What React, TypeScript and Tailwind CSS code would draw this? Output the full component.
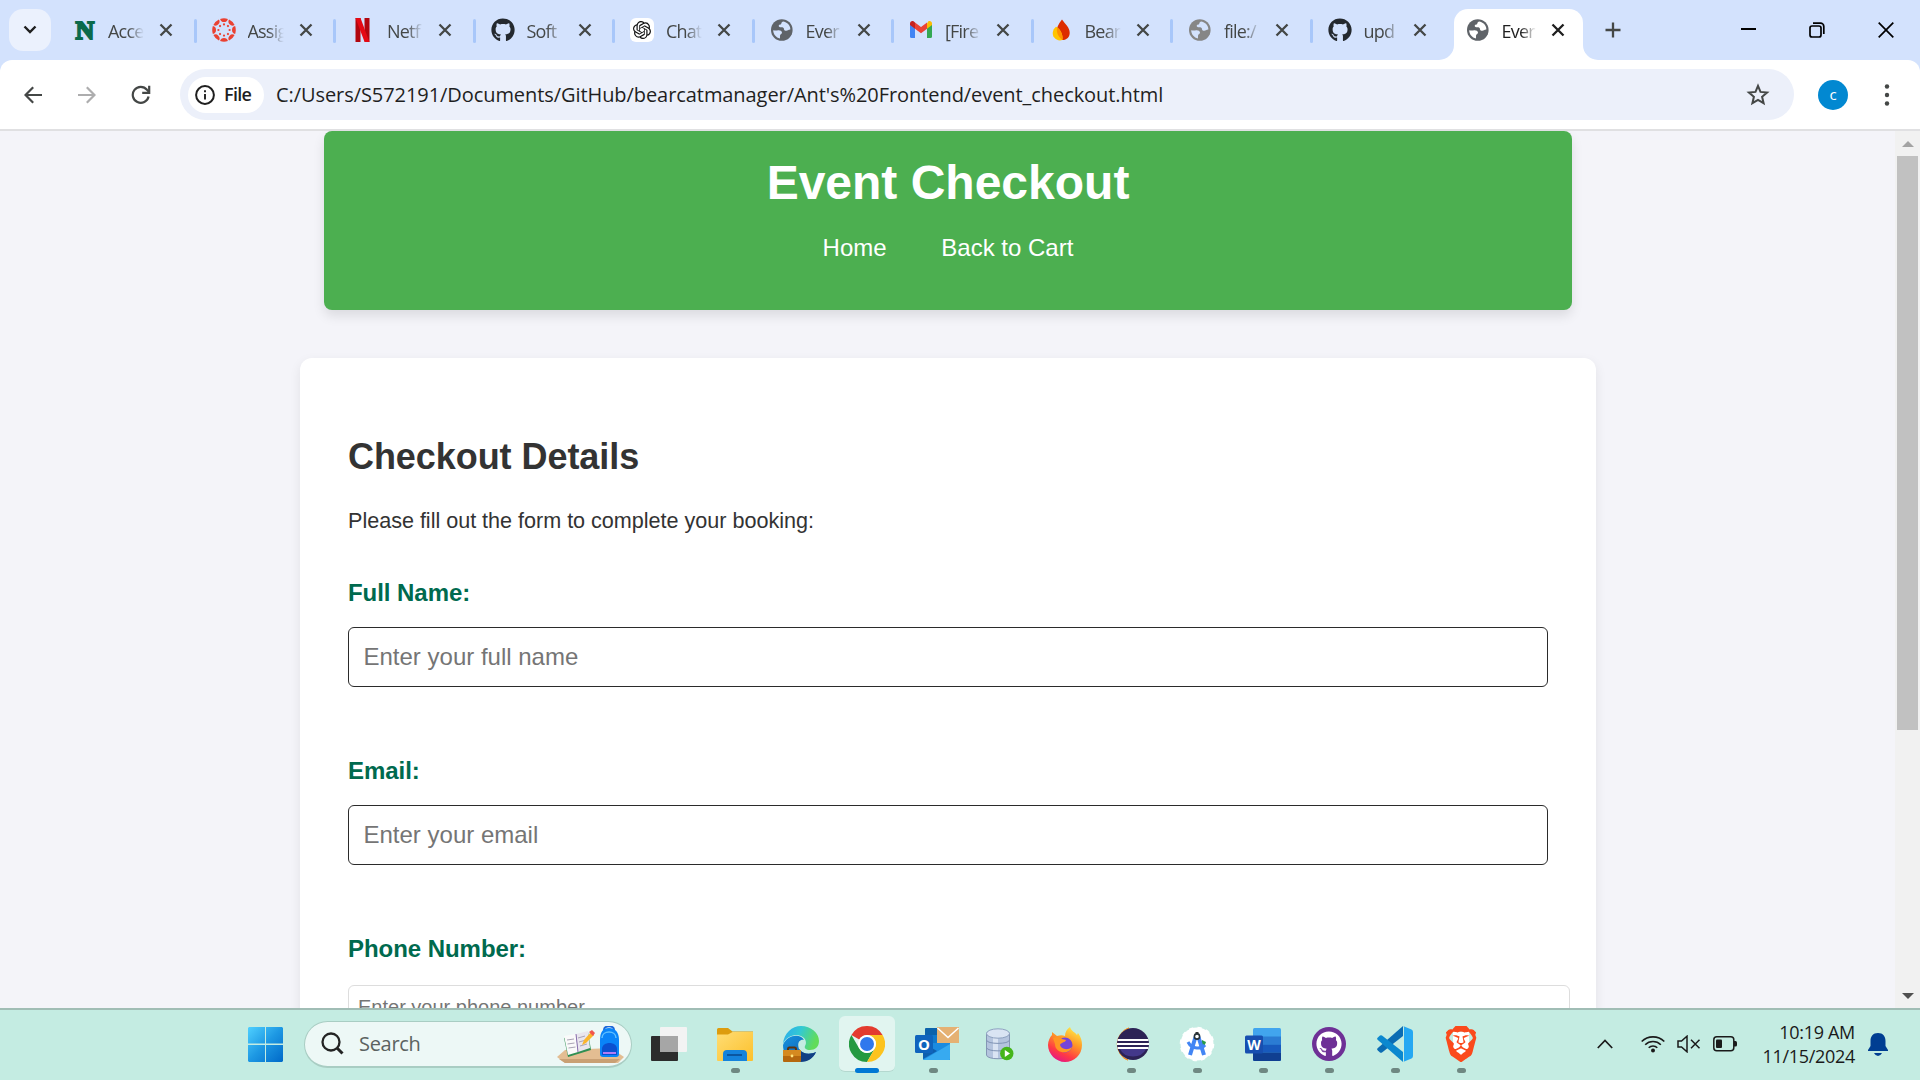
import React from "react";
import { FaGithub } from "react-icons/fa";
import { SiOpenai, SiBrave } from "react-icons/si";

const UI = "font-['Open_Sans','Noto_Sans',sans-serif]";

function Close({ dark }: { dark?: boolean }) {
  return (
    <svg width="14" height="14" viewBox="0 0 14 14" className="shrink-0">
      <path d="M1.500 1.500 12.500 12.500M12.500 1.500 1.500 12.500" stroke={dark ? "#1f1f1f" : "#444746"} strokeWidth="2.300" />
    </svg>
  );
}

function GlobeIcon({ color, land }: { color: string; land: string }) {
  return (
    <svg width="24" height="24" viewBox="0 0 24 24" className="shrink-0">
      <circle cx="11.800" cy="12" r="10.800" fill={color} />
      <path d="M13.500 3.400c-1.500.2-2.200 1-2.200 2.200 0 1.300-2.600.8-2.600 2.400 0 1 1.200 1.300 2.600 1.300 1.700 0 2.700.6 2.700 2 0 1.300 1.200 1.500 2.300 1.500 1.400 0 1.800-1.300 4-1.300.4-3.400-2.600-7.200-6.800-8.100z" fill={land} />
      <path d="M3.200 12.200c1.800.2 3.500.3 4.800 0 1.800-.3 3.700.6 4 2.200.2 1.300-1.700 1.500-1.900 2.800-.2 1.500 0 2.300-.2 3.300-3.700-.9-6.700-4.300-6.700-8.300z" fill={land} />
    </svg>
  );
}

function CanvasIcon() {
  const spokes = [0, 45, 90, 135, 180, 225, 270, 315];
  return (
    <svg width="24" height="24" viewBox="-12 -12 24 24">
      {spokes.map((a) => (
        <g key={a} transform={`rotate(${a})`} fill="#ea4132">
          <path d="M-3.900 -11.100 A11.800 11.800 0 0 1 3.900 -11.100 A4 4 0 0 1 -3.900 -11.100Z" />
          <circle cx="0" cy="-5.600" r="1.100" />
        </g>
      ))}
    </svg>
  );
}

function NetflixIcon() {
  return (
    <svg width="24" height="24" viewBox="0 0 24 24">
      <path d="M4.500 0h5v24l-5 .3z M13.500 0h5v24l-5-.3z" fill="#b1060f" />
      <path d="M4.500 0h5l9 24.200-5-.5z" fill="#e50914" />
    </svg>
  );
}

function GmailIcon() {
  return (
    <svg width="24" height="24" viewBox="0 0 24 24">
      <path d="M1 6v12.500a1.500 1.500 0 0 0 1.500 1.500H6V9.800z" fill="#4285f4" />
      <path d="M23 6v12.500a1.500 1.500 0 0 1-1.500 1.500H18V9.800z" fill="#34a853" />
      <path d="M18 5.500v5.300l5-3.800V5.300c0-2-2.200-3-3.800-1.900z" fill="#fbbc04" />
      <path d="M6 10.800V4.500l6 4.600 6-4.600v6.300l-6 4.500z" fill="#ea4335" />
      <path d="M1 5.300V7l5 3.800V4.500L4.800 3.400C3.200 2.300 1 3.300 1 5.300z" fill="#c5221f" />
    </svg>
  );
}

function FlameIcon() {
  return (
    <svg width="24" height="24" viewBox="0 0 24 24">
      <path d="M13 1.500C10.500 5 8 8 7.800 13c-.2 5 2.200 9 5.700 9 4.300 0 7.200-3 7.200-7.300C20.700 9.500 16.500 6.500 13 1.500z" fill="#dd2c00" />
      <path d="M7 8.800C3.200 12 3 16.500 5 19.300c2 2.700 5.200 3.700 8.300 2.700C14.500 17 11 10.500 7 8.800z" fill="#ffc400" />
      <path d="M8.200 9.600C7 14 9 19 13.400 22 14.300 17.500 11.500 12 8.200 9.600z" fill="#ff9100" />
    </svg>
  );
}

const tabs: { label: string; icon: React.ReactNode }[] = [
  {
    label: "Acce",
    icon: (
      <span className="block h-6 w-6 pl-0.5 text-center font-['Liberation_Serif',serif] text-[26px] font-bold leading-[26px] text-[#0b6a4b] [-webkit-text-stroke:2px_#0b6a4b]">
        N
      </span>
    ),
  },
  { label: "Assig", icon: <CanvasIcon /> },
  { label: "Netf", icon: <NetflixIcon /> },
  { label: "Soft", icon: <FaGithub size={24} color="#24292f" /> },
  {
    label: "Chat",
    icon: (
      <span className="flex h-6 w-6 items-center justify-center rounded-md bg-white">
        <SiOpenai size={18} color="#111" />
      </span>
    ),
  },
  { label: "Ever", icon: <GlobeIcon color="#5f6368" land="#d3e2fd" /> },
  { label: "[Fire", icon: <GmailIcon /> },
  { label: "Bear", icon: <FlameIcon /> },
  { label: "file:/", icon: <GlobeIcon color="#868686" land="#d3e2fd" /> },
  { label: "upd", icon: <FaGithub size={24} color="#24292f" /> },
];

const fade = "[mask-image:linear-gradient(to_right,black_55%,transparent_100%)]";

function TabStrip() {
  return (
    <div className={`flex h-[60px] items-end bg-[#d3e2fd] ${UI}`}>
      <div className="mb-[9px] ml-[9px] flex h-[42px] w-[42px] items-center justify-center rounded-[14px] bg-[#ebf1fd]">
        <svg width="14" height="10" viewBox="0 0 14 10">
          <path d="M1.500 1.500 7 7l5.500-5.500" fill="none" stroke="#1f1f1f" strokeWidth="2.400" />
        </svg>
      </div>
      <div className="ml-[5px] flex h-[60px]">
        {tabs.map((t, i) => (
          <div
            key={i}
            className={`relative flex h-[60px] items-center pl-4 ${i === 9 ? "w-[128px]" : "w-[139.500px]"}`}
          >
            <span className="flex h-6 w-6 shrink-0 items-center justify-center">{t.icon}</span>
            <span
              className={`ml-3 w-[36px] whitespace-nowrap pt-0.5 text-[18px] leading-6 tracking-[-0.8px] text-[#444746] ${fade} ${i === 9 ? "mr-[13px]" : "mr-[15px]"}`}
            >
              {t.label}
            </span>
            <Close />
            {i < 9 && <span className="absolute -right-px top-[19px] h-6 w-[3px] rounded-full bg-[#a8c7fa]" />}
          </div>
        ))}
      </div>
      <svg width="15" height="15" viewBox="0 0 15 15" className="-ml-px">
        <path d="M0 15A15 15 0 0 0 15 0V15z" fill="#fff" />
      </svg>
      <div className="flex h-[51px] w-[129px] items-center rounded-t-[14px] bg-white pb-[9px] pl-3">
        <GlobeIcon color="#5f6368" land="#ffffff" />
        <span className={`ml-3 w-[34px] whitespace-nowrap pt-0.5 text-[18px] leading-6 tracking-[-0.8px] text-[#1f1f1f] ${fade}`}>
          Ever
        </span>
        <span className="ml-[15.500px]">
          <Close dark />
        </span>
      </div>
      <svg width="15" height="15" viewBox="0 0 15 15">
        <path d="M15 15A15 15 0 0 1 0 0V15z" fill="#fff" />
      </svg>
      <div className="flex h-[60px] flex-1 items-center pl-[7px]">
        <svg width="16" height="16" viewBox="0 0 16 16">
          <path d="M8 .5v15M.5 8h15" stroke="#444746" strokeWidth="2.300" />
        </svg>
        <svg width="15" height="16" viewBox="0 0 15 16" className="ml-[120px]">
          <path d="M0 7h15" stroke="#000" strokeWidth="2" />
        </svg>
        <svg width="16" height="16" viewBox="0 0 16 16" className="ml-[53px]">
          <rect x="1" y="4" width="11" height="11" rx="2" fill="none" stroke="#000" strokeWidth="1.700" />
          <path d="M4 1.200h7.500a3.300 3.300 0 0 1 3.300 3.300V12" fill="none" stroke="#000" strokeWidth="1.700" />
        </svg>
        <svg width="16" height="16" viewBox="0 0 16 16" className="ml-[53px]">
          <path d="M.7.7l14.600 14.600M15.300.7.7 15.300" stroke="#000" strokeWidth="1.700" />
        </svg>
      </div>
    </div>
  );
}

function Toolbar() {
  return (
    <div className="bg-[#d3e2fd]">
      <div className={`flex h-[71px] items-center rounded-t-xl border-b-2 border-[#e0e0e2] bg-white ${UI}`}>
        <svg width="18" height="18" viewBox="0 0 18 18" className="ml-6">
          <path d="M18 9H1.500M9.200 1.200 1.500 9l7.700 7.800" fill="none" stroke="#444746" strokeWidth="2.200" />
        </svg>
        <svg width="18" height="18" viewBox="0 0 18 18" className="ml-9">
          <path d="M0 9h16.500M8.800 1.200 16.500 9l-7.700 7.800" fill="none" stroke="#adadae" strokeWidth="2.200" />
        </svg>
        <svg width="20" height="20" viewBox="0 0 20 20" className="ml-[35px]">
          <path d="M17.600 11.500A8 8 0 1 1 16 4.800L18 7" fill="none" stroke="#444746" strokeWidth="2.200" />
          <path d="M18.200.8v7h-7" fill="none" stroke="#444746" strokeWidth="2.200" />
        </svg>
        <div className="ml-[29px] flex h-[51px] w-[1614px] items-center rounded-full bg-[#ecf0fa] pl-2">
          <div className="flex h-9 w-[76px] items-center rounded-full bg-white pl-[7px]">
            <svg width="20" height="20" viewBox="0 0 20 20">
              <circle cx="10" cy="10" r="8.900" fill="none" stroke="#1f1f1f" strokeWidth="2" />
              <path d="M10 9v5.500M10 5.300v2" stroke="#1f1f1f" strokeWidth="1.900" />
            </svg>
            <span className="ml-[9px] text-[18px] font-semibold tracking-[-0.7px] text-[#1f1f1f]">File</span>
          </div>
          <span className="ml-3 whitespace-nowrap text-[20px] tracking-[-0.070px] text-[#1f1f1f]">
            C:/Users/S572191/Documents/GitHub/bearcatmanager/Ant's%20Frontend/event_checkout.html
          </span>
          <svg width="24" height="24" viewBox="0 0 24 24" className="ml-auto mr-6">
            <path
              d="m12 2.800 2.500 6.100 6.600.6-5 4.300 1.500 6.400L12 16.800l-5.600 3.400 1.500-6.400-5-4.300 6.600-.6z"
              fill="none"
              stroke="#444746"
              strokeWidth="2"
            />
          </svg>
        </div>
        <div className="ml-6 flex h-[30px] w-[30px] items-center justify-center rounded-full bg-[#0288d1] text-[15px] leading-none text-white">
          c
        </div>
        <svg width="6" height="24" viewBox="0 0 6 24" className="ml-9">
          <circle cx="3" cy="3.500" r="2.200" fill="#444746" />
          <circle cx="3" cy="12" r="2.200" fill="#444746" />
          <circle cx="3" cy="20.500" r="2.200" fill="#444746" />
        </svg>
      </div>
    </div>
  );
}

function Field({ label, hint }: { label: string; hint: string }) {
  return (
    <div className="h-[178px]">
      <div className="text-2xl font-bold leading-[34px] tracking-[-0.050px] text-[#006a4e]">{label}</div>
      <div className="mt-[17px] flex h-[60px] w-[1200px] items-center rounded-md border border-[#2b2b2b] pl-[14.500px] text-2xl text-[#757575]">
        {hint}
      </div>
    </div>
  );
}

function Page() {
  return (
    <div className="flex h-[877px] overflow-hidden bg-[#f4f4f9] font-['Liberation_Sans',Arial,sans-serif] text-[#333]">
      <div className="w-[1895px] overflow-hidden">
        <div className="ml-[324px] flex h-[179px] w-[1248px] flex-col items-center rounded-lg bg-[#4caf50] text-white shadow-[0_6px_12px_rgba(0,0,0,0.1)]">
          <h1 className="mt-6 text-[48px] font-bold leading-[56px]">Event Checkout</h1>
          <div className="mt-[21px] flex gap-[54.700px] text-2xl">
            <span>Home</span>
            <span>Back to Cart</span>
          </div>
        </div>
        <div className="ml-[300px] mt-12 h-[700px] w-[1296px] rounded-xl bg-white pl-12 shadow-[0_4px_12px_rgba(0,0,0,0.08)]">
          <h2 className="pt-[79px] text-[36px] font-bold leading-[40px] tracking-[-0.060px]">Checkout Details</h2>
          <p className="mt-[31px] text-[21.600px] leading-[26px] tracking-[-0.020px]">Please fill out the form to complete your booking:</p>
          <div className="mt-[42px]">
            <Field label="Full Name:" hint="Enter your full name" />
            <Field label="Email:" hint="Enter your email" />
            <div className="text-2xl font-bold leading-[34px] tracking-[-0.050px] text-[#006a4e]">Phone Number:</div>
            <div className="mt-[19px] h-[45px] w-[1222px] rounded-md border border-[#ddd] pl-[9px] pt-2.5 text-[20px] leading-[23px] text-[#757575]">
              Enter your phone number
            </div>
          </div>
        </div>
      </div>
      <div className="flex w-[25px] flex-col items-center justify-between bg-[#f1f1f1] pb-[9px] pt-[10px]">
        <svg width="12" height="6" viewBox="0 0 12 6">
          <path d="M0 6 6 0l6 6z" fill="#a3a3a3" />
        </svg>
        <div className="mb-auto mt-[9px] h-[574px] w-[21px] bg-[#c1c1c1]" />
        <svg width="12" height="6" viewBox="0 0 12 6">
          <path d="M0 0h12L6 6z" fill="#505050" />
        </svg>
      </div>
    </div>
  );
}

function WindowsLogo() {
  return (
    <svg width="35" height="35" viewBox="0 0 35 35">
      <defs>
        <linearGradient id="win" x1="0" y1="0" x2="1" y2="1">
          <stop offset="0" stopColor="#4fd0ff" />
          <stop offset=".5" stopColor="#1d98e3" />
          <stop offset="1" stopColor="#0069c8" />
        </linearGradient>
      </defs>
      <path d="M1 0h16v16.500H0V1zM18 0h16l1 1v15.500H18zM0 18h17v17H1l-1-1zM18 18h17v16l-1 1H18z" fill="url(#win)" />
    </svg>
  );
}

function SearchArt() {
  return (
    <svg width="68" height="38" viewBox="0 0 68 38">
      <path d="M0 31 8 24l46-2 13 9-6 6H8z" fill="#e3bd92" />
      <path d="M2 33l6 4h50l5-4z" fill="#c9a074" />
      <path d="m7 12 24-6 3 18-23 7z" fill="#2f8f52" />
      <path d="m7 10 12-2 2 18-10 3z" fill="#fafafa" />
      <path d="m19 8 12-3 2 17-12 4z" fill="#e9e6ee" />
      <path d="m10 14 7-1M10.500 18l7-1M11.500 22l7-1M21 12l7-2M22 16l7-2M23 20l7-2" stroke="#a9a3b5" strokeWidth="1" />
      <path d="m19 8 2 18" stroke="#8a6fb0" strokeWidth="1" />
      <path d="m25 19 2-5 7-8 3 3-8 8z" fill="#fbb52b" />
      <path d="m32 6 3-2 3 3-2 3z" fill="#f0564f" />
      <path d="M47 4c0-5 10-5 10 0" fill="none" stroke="#1c66d8" strokeWidth="2" />
      <path d="M43 14C43 6 46 2 52 2s10 4 10 12v14c0 2-1 3-3 3H46c-2 0-3-1-3-3z" fill="#0a84f8" />
      <path d="M45 12c0-8 14-8 14 0" fill="none" stroke="#5fc0ff" strokeWidth="1.500" />
      <path d="M45 23c0-8 15-8 15 0v6H45z" fill="#0b50d0" />
      <path d="M46 27h13" stroke="#b07cf5" strokeWidth="2" />
    </svg>
  );
}

function TaskViewIcon() {
  return (
    <svg width="36" height="34" viewBox="0 0 36 34">
      <rect x="0" y="9" width="27" height="25" rx="1" fill="#2c2c2c" />
      <rect x="9" y="0" width="27" height="25" rx="1" fill="#f3f3f3" />
      <rect x="9" y="9" width="18" height="16" fill="#a6a6a6" />
    </svg>
  );
}

function FolderIcon() {
  return (
    <svg width="36" height="33" viewBox="0 0 36 33">
      <defs>
        <linearGradient id="fold" x1="0" y1="0" x2="1" y2="1">
          <stop offset="0" stopColor="#ffdd75" />
          <stop offset="1" stopColor="#fcc02b" />
        </linearGradient>
      </defs>
      <path d="M0 1.500Q0 0 1.500 0H11l4.500 3.500H36V12H0z" fill="#dd9c0e" />
      <path d="M0 6.500h11l4.500-2.500H36v28q0 1-1 1H1q-1 0-1-1z" fill="url(#fold)" />
      <path d="M6 33v-7q0-4 4-4h16q4 0 4 4v7z" fill="#1583dc" />
      <path d="M10 27h15" stroke="#0b56a0" strokeWidth="2" />
    </svg>
  );
}

function EdgeIcon() {
  return (
    <svg width="36" height="36" viewBox="0 0 36 36">
      <defs>
        <linearGradient id="edgeTop" x1="0" y1="0" x2="1" y2=".3">
          <stop offset="0" stopColor="#2aa9f0" />
          <stop offset=".5" stopColor="#33c9d3" />
          <stop offset="1" stopColor="#62dc5a" />
        </linearGradient>
        <linearGradient id="edgeMid" x1="0" y1="0" x2="1" y2="1">
          <stop offset="0" stopColor="#1693df" />
          <stop offset="1" stopColor="#0d53a8" />
        </linearGradient>
      </defs>
      <path d="M0 19C4 9 17 7 21 14c-5-1-7 4-5 9 3 5 11 6 17 3-4 9-16 12-24 8C3 31 0 26 0 19z" fill="url(#edgeMid)" />
      <path d="M16 23c3 5 11 6 17 3-3 7-9 10-16 10z" fill="#123f83" />
      <path d="M0 18C1 7 9 0 18 0c10 0 18 7 18 15 0 6-4 9-9 9-4 0-6-2-5-4 2-3 1-8-4-10C11 7 3 11 0 18z" fill="url(#edgeTop)" />
      <rect x="5" y="21.500" width="8" height="5" rx="1.500" fill="none" stroke="#5a3210" strokeWidth="2" />
      <rect x="0" y="24" width="18" height="12" rx="1" fill="#b5680e" />
      <path d="M0 24h18v6H0z" fill="#d58a20" />
      <circle cx="9" cy="30" r="1.400" fill="#ffe27a" />
    </svg>
  );
}

function ChromeIcon() {
  return (
    <svg width="36" height="36" viewBox="-18 -18 36 36">
      <path d="M-15.590 -9A18 18 0 0 1 15.590 -9H0A9 9 0 0 0 -7.790 -4.500z" fill="#e33b2e" />
      <path d="M-15.590 -9A18 18 0 0 0 0 18L7.790 4.500A9 9 0 0 1 -7.790 4.500z" fill="#249a41" />
      <path d="M15.590 -9A18 18 0 0 1 0 18L7.790 4.500A9 9 0 0 0 0 -9z" fill="#fcc31e" />
      <circle r="9" fill="#fff" />
      <circle r="7" fill="#2f78ed" />
    </svg>
  );
}

function OutlookIcon() {
  return (
    <svg width="44" height="34" viewBox="0 0 44 34">
      <path d="M10 2q0-1 1-1h12v16H10z" fill="#0c62ab" />
      <path d="M15 8h14v14H15z" fill="#1179ca" />
      <path d="M8 16h27v17H9q-1 0-1-1z" fill="#1b8be0" />
      <path d="M8 33 35 17v15q0 1-1 1z" fill="#37aaf0" />
      <path d="M8 16l14 8-14 8z" fill="#0e5fae" />
      <rect x="0" y="8" width="18" height="18" rx="1.500" fill="#0f64bd" />
      <text x="9" y="22.500" textAnchor="middle" fontSize="15" fontWeight="bold" fontFamily="Open Sans, sans-serif" fill="#fff">O</text>
      <rect x="22" y="0" width="22" height="16" fill="#e5b173" />
      <path d="m22.500 1 10.500 9.500L43.500 1" fill="none" stroke="#fff" strokeWidth="1.500" />
    </svg>
  );
}

function DatabaseIcon() {
  return (
    <svg width="28" height="33" viewBox="0 0 28 33">
      <path d="M.5 5v22c0 5 23 5 23 0V5z" fill="#b4c4de" stroke="#8496b4" />
      <path d="M7 8v22h5V8z" fill="#dae4f3" />
      <path d="M.5 12c0 4.500 23 4.500 23 0M.5 19.500c0 4.500 23 4.500 23 0" fill="none" stroke="#8094b5" />
      <ellipse cx="12" cy="5.500" rx="11.500" ry="4.700" fill="#d9e4f3" stroke="#8ea2c0" />
      <circle cx="20.800" cy="25.500" r="6.700" fill="#45b51b" />
      <path d="m18.800 22 5.200 3.500-5.200 3.500z" fill="#fff" />
    </svg>
  );
}

function FirefoxIcon() {
  return (
    <svg width="34" height="35" viewBox="0 0 34 35">
      <defs>
        <linearGradient id="fx" x1=".8" y1="0" x2=".3" y2="1">
          <stop offset="0" stopColor="#fff04a" />
          <stop offset=".4" stopColor="#ff9a26" />
          <stop offset=".75" stopColor="#ff3a44" />
          <stop offset="1" stopColor="#e3158a" />
        </linearGradient>
      </defs>
      <path d="M22 0c1 4 5 5 7 8l1-2c3 4 4 8 4 12 0 10-8 17-17 17S0 27 0 18C0 14 2 10 4 8V5l5 4c3-1 6-1 8 0 0-4 2-7 5-9z" fill="url(#fx)" />
      <circle cx="17" cy="18" r="7.500" fill="#7544d8" />
      <path d="M5 11c4-2 8-1 9 1l4 1c-1 3-5 2-6 5 1 4 7 6 12 2-2 8-17 7-17-3z" fill="#ff9623" />
    </svg>
  );
}

function EclipseIcon() {
  return (
    <svg width="36" height="34" viewBox="0 0 36 34">
      <path d="M16 1A17 17 0 0 0 15 33C2 30 2 5 16 1z" fill="#f79426" stroke="#f79426" />
      <circle cx="20" cy="17" r="16" fill="#2c2255" />
      <path d="M7 22a14 12 0 0 0 26 0z" fill="#43388a" />
      <path d="M4.500 13h31M4 17h32M4.500 21h31" stroke="#fff" strokeWidth="2" />
    </svg>
  );
}

function AndroidStudioIcon() {
  return (
    <svg width="36" height="36" viewBox="-18 -18 36 36">
      <circle r="16.500" fill="#fff" />
      <circle r="16.500" fill="none" stroke="#fff" strokeWidth="1.600" strokeDasharray="4.300 4.340" />
      <path d="M5-4l4 2-2 5-3-1z" fill="#279b48" />
      <path d="M-1.500-7-7 11M1.500-7 7 11" stroke="#4285f4" strokeWidth="4" />
      <path d="M-9-2C-5 6 5 5 8 1" fill="none" stroke="#4285f4" strokeWidth="3" />
      <path d="M0-12v3" stroke="#333" strokeWidth="3" />
      <circle cy="-7.500" r="2.600" fill="#fff" stroke="#263238" strokeWidth="1.600" />
    </svg>
  );
}

function WordIcon() {
  return (
    <svg width="36" height="33" viewBox="0 0 36 33">
      <rect x="8" y="0" width="28" height="33" rx="1.500" fill="#41a5ee" />
      <path d="M8 8.500h28v8H8z" fill="#2b7cd3" />
      <path d="M8 16.500h28v8H8z" fill="#185abd" />
      <path d="M8 24.500h28v7q0 1.500-1.500 1.500h-25Q8 33 8 31.500z" fill="#103f91" />
      <rect x="0" y="7.500" width="18" height="18" rx="1.500" fill="#174fb0" />
      <text x="9" y="21.500" textAnchor="middle" fontSize="14" fontWeight="bold" fontFamily="Open Sans, sans-serif" fill="#fff">W</text>
    </svg>
  );
}

function GithubDesktopIcon() {
  return (
    <span className="flex h-[34px] w-[34px] items-center justify-center rounded-full bg-[#6e3096]">
      <FaGithub size={26} color="#fff" />
    </span>
  );
}

function VSCodeIcon() {
  return (
    <svg width="36" height="36" viewBox="0 0 36 36">
      <path d="M26 0v10L5 26.500q-1 .7-2 0L.6 24.300q-1-1 0-2z" fill="#0b6cb3" />
      <path d="M26 36V26L5 9.500q-1-.7-2 0L.6 11.700q-1 1 0 2z" fill="#0b88cf" />
      <path d="M26 0 34.500 3.500Q36 4.200 36 6v24q0 1.800-1.500 2.500L26 36q1 0 1-1.500v-33Q27 0 26 0z" fill="#25a8f2" />
    </svg>
  );
}

function BraveIcon() {
  return (
    <span className="relative flex h-9 w-9 items-center justify-center">
      <span className="absolute h-6 w-4 bg-white" />
      <SiBrave size={36} color="#fb4a1c" className="relative" />
    </span>
  );
}

const apps: { icon: React.ReactNode; dot?: boolean; active?: boolean }[] = [
  { icon: <TaskViewIcon /> },
  { icon: <FolderIcon />, dot: true },
  { icon: <EdgeIcon /> },
  { icon: <ChromeIcon />, active: true },
  { icon: <span className="-mr-2"><OutlookIcon /></span>, dot: true },
  { icon: <span className="pl-0.5"><DatabaseIcon /></span> },
  { icon: <FirefoxIcon /> },
  { icon: <EclipseIcon />, dot: true },
  { icon: <AndroidStudioIcon />, dot: true },
  { icon: <WordIcon />, dot: true },
  { icon: <GithubDesktopIcon />, dot: true },
  { icon: <VSCodeIcon />, dot: true },
  { icon: <BraveIcon />, dot: true },
];

function Taskbar() {
  return (
    <div className={`flex h-[72px] items-center border-t-2 border-[#a0bdb5] bg-[#c4ece2] pb-0.5 ${UI}`}>
      <span className="ml-[248px]">
        <WindowsLogo />
      </span>
      <div className="ml-[21px] flex h-[47px] w-[328px] items-center rounded-full border border-b-2 border-[#a9cdc3] bg-[#edf8f6] pl-4">
        <svg width="23" height="23" viewBox="0 0 23 23">
          <circle cx="10" cy="10" r="8.500" fill="none" stroke="#242424" strokeWidth="2.300" />
          <path d="m16 16 5.500 5.500" stroke="#242424" strokeWidth="3" />
        </svg>
        <span className="ml-[15px] pt-px text-[20px] tracking-[-0.3px] text-[#5b6361]">Search</span>
        <span className="ml-auto mr-[6px] pt-0.5">
          <SearchArt />
        </span>
      </div>
      <div className="ml-1 flex">
        {apps.map((a, i) => (
          <div key={i} className="flex w-[66px] justify-center">
            <div
              className={`relative flex h-14 w-14 items-center justify-center rounded-md ${a.active ? "border-b border-[#b4d8cf] bg-[#e1f5f0]" : ""}`}
            >
              {a.icon}
              {a.dot && <span className="absolute -bottom-px left-6 h-[5px] w-[9px] rounded-full bg-[#6f8882]" />}
              {a.active && <span className="absolute -bottom-[2px] left-4 h-[5px] w-6 rounded-full bg-[#0078d4]" />}
            </div>
          </div>
        ))}
      </div>
      <svg width="16" height="10" viewBox="0 0 16 10" className="ml-[103px]">
        <path d="m.8 9 7.200-7.500L15.200 9" fill="none" stroke="#1a1a1a" strokeWidth="1.700" />
      </svg>
      <svg width="24" height="18" viewBox="0 0 24 18" className="ml-7">
        <g fill="none" stroke="#1a1a1a" strokeWidth="1.600">
          <path d="M.7 6.500a16 16 0 0 1 22.600 0" />
          <path d="M4.200 9.700a11 11 0 0 1 15.600 0" />
          <path d="M7.700 12.800a6 6 0 0 1 8.600 0" />
        </g>
        <circle cx="12" cy="15.600" r="2" fill="#1a1a1a" />
      </svg>
      <svg width="24" height="18" viewBox="0 0 24 18" className="ml-[12px]">
        <path d="M1 6h3.500L10 1.200v15.600L4.500 12H1z" fill="none" stroke="#1a1a1a" strokeWidth="1.500" />
        <path d="m14 4.800 8.500 8.500m0-8.500L14 13.300" stroke="#1a1a1a" strokeWidth="1.500" />
      </svg>
      <svg width="24" height="16" viewBox="0 0 24 16" className="ml-[12px]">
        <rect x=".8" y=".8" width="20" height="14" rx="3" fill="none" stroke="#1a1a1a" strokeWidth="1.500" />
        <rect x="3" y="3.500" width="6" height="8.500" rx="1" fill="#1a1a1a" />
        <path d="M21 5h1.500q1.500 0 1.500 1.500v2.500q0 1.500-1.500 1.500H21z" fill="#1a1a1a" />
      </svg>
      <div className="ml-auto mr-[13px] text-right text-[18px] leading-6 tracking-[-0.3px] text-[#1a1a1a]">
        <div>10:19 AM</div>
        <div>11/15/2024</div>
      </div>
      <svg width="20" height="23" viewBox="0 0 20 23" className="mr-8">
        <path d="M10 0c5 0 7.500 3.500 7.500 8v5l2.500 4v1H0v-1l2.500-4V8C2.500 3.500 5 0 10 0z" fill="#003e92" />
        <path d="M6 20h8q-1.500 3-4 3t-4-3z" fill="#003e92" />
      </svg>
    </div>
  );
}

export default function App() {
  return (
    <div className="h-[1080px] w-[1920px] overflow-hidden bg-white">
      <TabStrip />
      <Toolbar />
      <Page />
      <Taskbar />
    </div>
  );
}
